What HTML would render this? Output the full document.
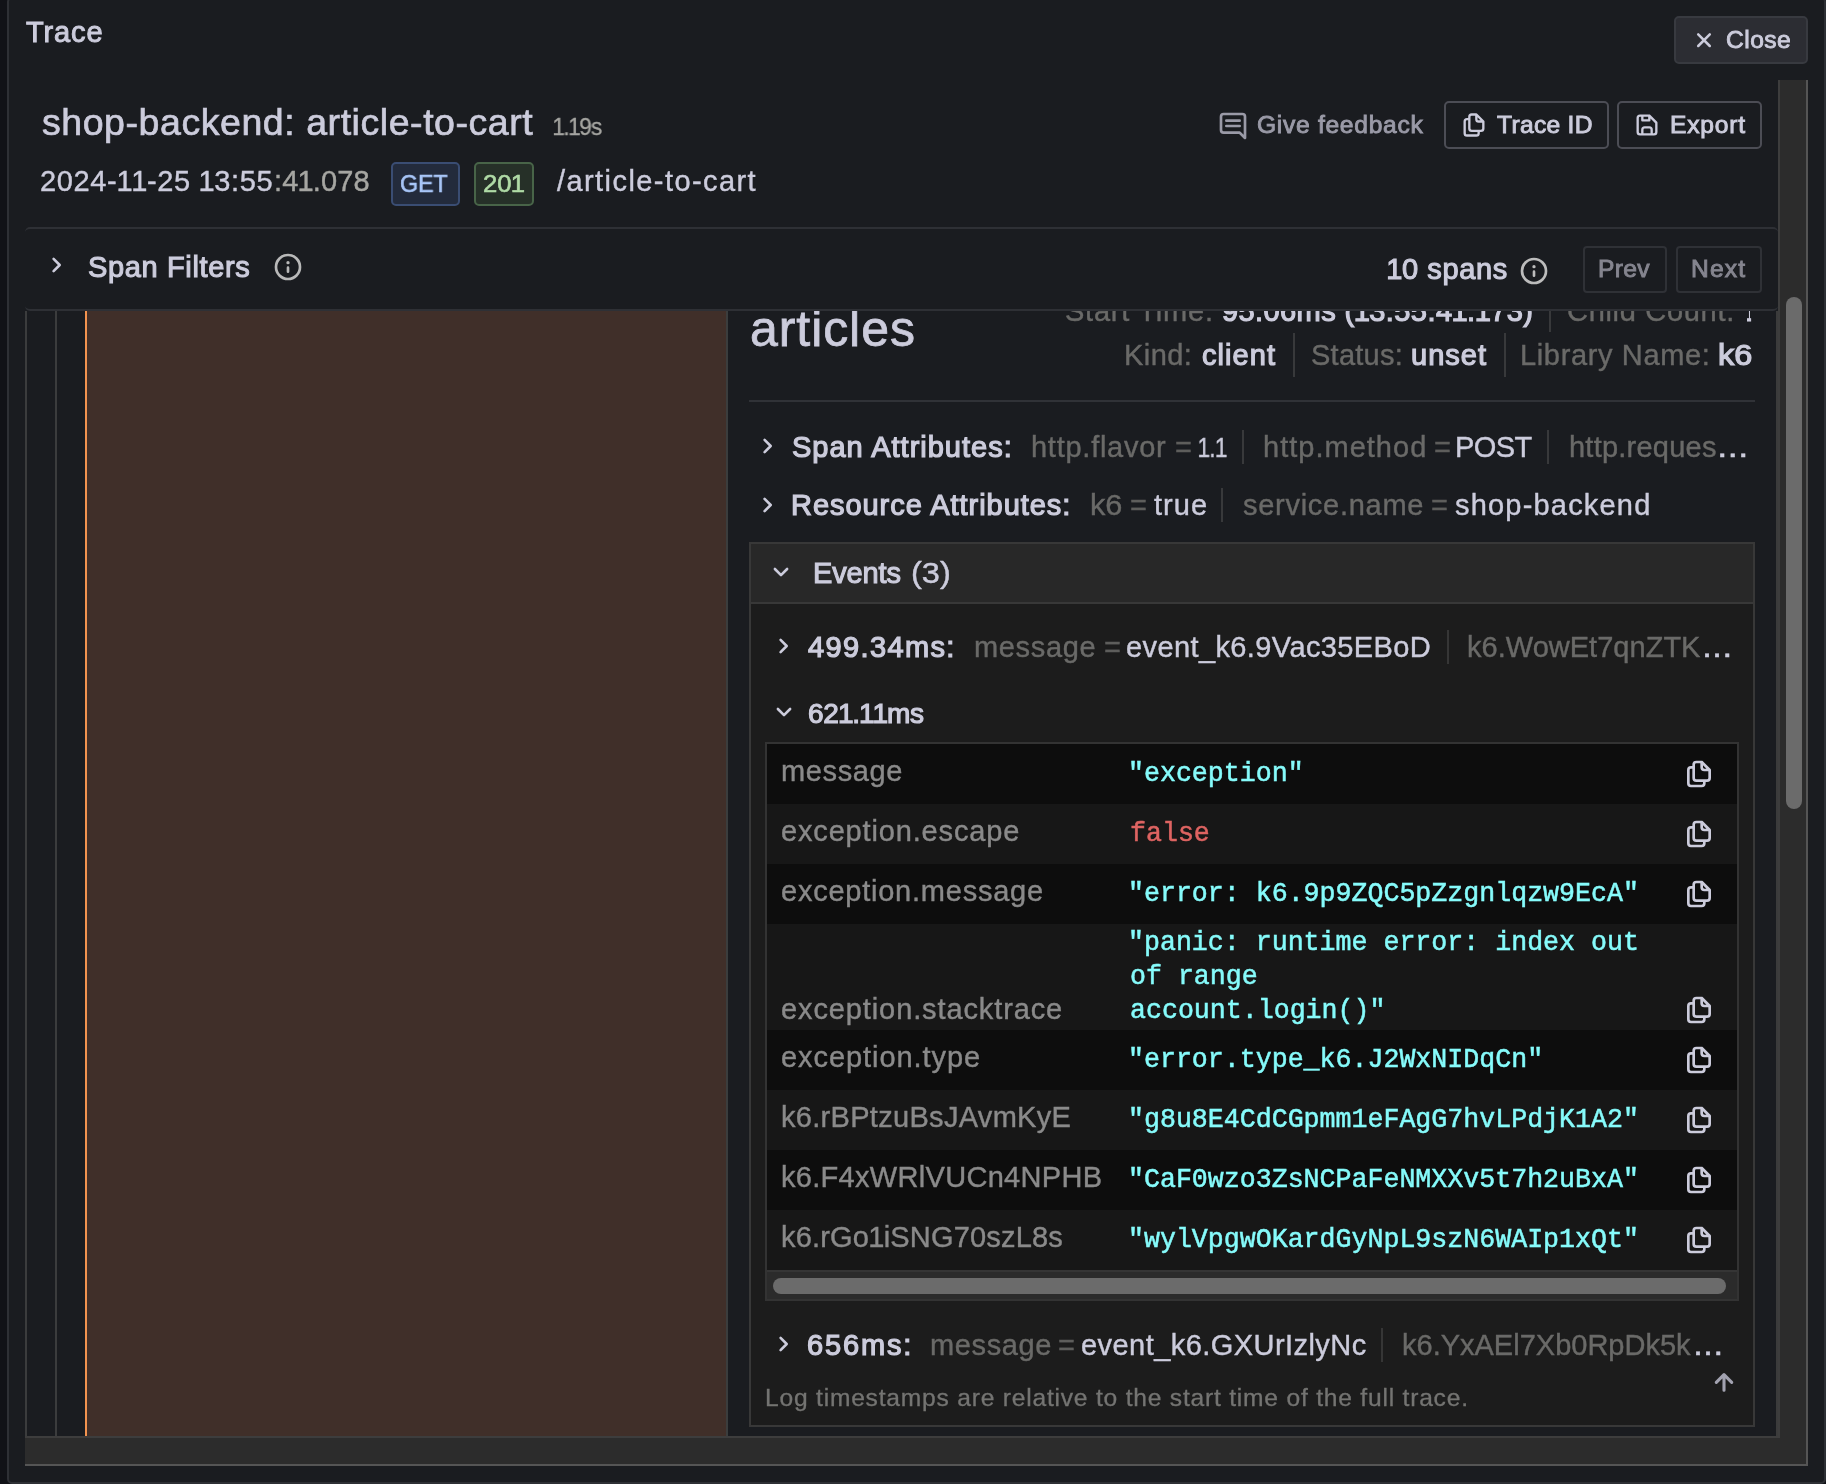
<!DOCTYPE html>
<html><head><meta charset="utf-8"><title>Trace</title>
<style>
html,body{margin:0;padding:0;}
body{width:1826px;height:1484px;overflow:hidden;background:#111217;position:relative;font-family:"Liberation Sans",sans-serif;}
.a{position:absolute;box-sizing:border-box;}
.t{position:absolute;white-space:pre;line-height:1;transform-origin:0 0;will-change:transform;}
.m{font-family:"Liberation Mono",monospace;}
</style></head><body>

<div class="a" style="left:7px;top:-3px;width:1819px;height:1487px;background:#1a1c20;border:2px solid #2e3035;border-radius:5px;"></div>
<div class="a" style="left:25px;top:311px;width:1753px;height:1127px;overflow:hidden;">
<div class="a" style="left:0px;top:0px;width:2px;height:1125px;background:#3b3c3d;"></div>
<div class="a" style="left:30px;top:0px;width:2px;height:1125px;background:#3b3c3d;"></div>
<div class="a" style="left:60px;top:0px;width:2px;height:1125px;background:#f3934f;"></div>
<div class="a" style="left:62px;top:0px;width:639px;height:1125px;background:#402f29;"></div>
<div class="a" style="left:701px;top:0px;width:2px;height:1125px;background:#3b3d3d;"></div>
<div class="a" style="left:1751px;top:0px;width:2px;height:1127px;background:#3b3b3b;"></div>
<div class="a" style="left:0px;top:1125px;width:1753px;height:2px;background:#3d3d3d;"></div>
<div class="a" style="left:724px;top:89px;width:1006px;height:2px;background:#303237;"></div>
<div class="a" style="left:1268px;top:22px;width:2px;height:44px;background:#38393b;"></div>
<div class="a" style="left:1479px;top:22px;width:2px;height:44px;background:#38393b;"></div>
<div class="a" style="left:1524px;top:-11px;width:2px;height:32px;background:#38393b;"></div>
<div class="a" style="left:1217px;top:119px;width:2px;height:34px;background:#38393b;"></div>
<div class="a" style="left:1522px;top:119px;width:2px;height:34px;background:#38393b;"></div>
<div class="a" style="left:1196px;top:177px;width:2px;height:34px;background:#38393b;"></div>
<div class="a" style="left:724px;top:231px;width:1006px;height:885px;background:#1c1c1c;border:2px solid #383838;"></div>
<div class="a" style="left:726px;top:233px;width:1002px;height:60px;background:#282828;border-bottom:2px solid #383838;"></div>
<div class="a" style="left:1422px;top:319px;width:2px;height:34px;background:#363636;"></div>
<div class="a" style="left:1356px;top:1017px;width:2px;height:34px;background:#363636;"></div>
<div class="a" style="left:740px;top:431px;width:974px;height:559px;background:#0d0d0d;border:2px solid #333;"></div>
<div class="a" style="left:742px;top:433px;width:970px;height:60px;background:#0d0d0d;"></div>
<div class="a" style="left:742px;top:493px;width:970px;height:60px;background:#171717;"></div>
<div class="a" style="left:742px;top:553px;width:970px;height:60px;background:#0d0d0d;"></div>
<div class="a" style="left:742px;top:613px;width:970px;height:106px;background:#171717;"></div>
<div class="a" style="left:742px;top:719px;width:970px;height:60px;background:#0d0d0d;"></div>
<div class="a" style="left:742px;top:779px;width:970px;height:60px;background:#171717;"></div>
<div class="a" style="left:742px;top:839px;width:970px;height:60px;background:#0d0d0d;"></div>
<div class="a" style="left:742px;top:899px;width:970px;height:60px;background:#171717;"></div>
<div class="a" style="left:742px;top:959px;width:970px;height:29px;background:#2b2b2b;border-top:2px solid #353535;"></div>
<div class="a" style="left:748px;top:967px;width:953px;height:16px;background:#6b6b6b;border-radius:8px;"></div>
</div>
<svg class="a" style="left:1683px;top:758px" width="32" height="32" viewBox="0 0 24 24"><path fill="#ccccdc" d="M21,8.94a1.31,1.31,0,0,0-.06-.27l0-.09a1.07,1.07,0,0,0-.19-.28h0l-6-6h0a1.07,1.07,0,0,0-.28-.19.32.32,0,0,0-.09,0A.88.88,0,0,0,14.05,2H10A3,3,0,0,0,7,5V6H6A3,3,0,0,0,3,9V19a3,3,0,0,0,3,3h8a3,3,0,0,0,3-3V18h1a3,3,0,0,0,3-3V9S21,9,21,8.94ZM15,5.41,17.59,8H16a1,1,0,0,1-1-1ZM15,19a1,1,0,0,1-1,1H6a1,1,0,0,1-1-1V9A1,1,0,0,1,6,8H7v7a3,3,0,0,0,3,3h5Zm4-4a1,1,0,0,1-1,1H10a1,1,0,0,1-1-1V5a1,1,0,0,1,1-1h3V7a3,3,0,0,0,3,3h3Z"/></svg>
<svg class="a" style="left:1683px;top:818px" width="32" height="32" viewBox="0 0 24 24"><path fill="#ccccdc" d="M21,8.94a1.31,1.31,0,0,0-.06-.27l0-.09a1.07,1.07,0,0,0-.19-.28h0l-6-6h0a1.07,1.07,0,0,0-.28-.19.32.32,0,0,0-.09,0A.88.88,0,0,0,14.05,2H10A3,3,0,0,0,7,5V6H6A3,3,0,0,0,3,9V19a3,3,0,0,0,3,3h8a3,3,0,0,0,3-3V18h1a3,3,0,0,0,3-3V9S21,9,21,8.94ZM15,5.41,17.59,8H16a1,1,0,0,1-1-1ZM15,19a1,1,0,0,1-1,1H6a1,1,0,0,1-1-1V9A1,1,0,0,1,6,8H7v7a3,3,0,0,0,3,3h5Zm4-4a1,1,0,0,1-1,1H10a1,1,0,0,1-1-1V5a1,1,0,0,1,1-1h3V7a3,3,0,0,0,3,3h3Z"/></svg>
<svg class="a" style="left:1683px;top:878px" width="32" height="32" viewBox="0 0 24 24"><path fill="#ccccdc" d="M21,8.94a1.31,1.31,0,0,0-.06-.27l0-.09a1.07,1.07,0,0,0-.19-.28h0l-6-6h0a1.07,1.07,0,0,0-.28-.19.32.32,0,0,0-.09,0A.88.88,0,0,0,14.05,2H10A3,3,0,0,0,7,5V6H6A3,3,0,0,0,3,9V19a3,3,0,0,0,3,3h8a3,3,0,0,0,3-3V18h1a3,3,0,0,0,3-3V9S21,9,21,8.94ZM15,5.41,17.59,8H16a1,1,0,0,1-1-1ZM15,19a1,1,0,0,1-1,1H6a1,1,0,0,1-1-1V9A1,1,0,0,1,6,8H7v7a3,3,0,0,0,3,3h5Zm4-4a1,1,0,0,1-1,1H10a1,1,0,0,1-1-1V5a1,1,0,0,1,1-1h3V7a3,3,0,0,0,3,3h3Z"/></svg>
<svg class="a" style="left:1683px;top:994px" width="32" height="32" viewBox="0 0 24 24"><path fill="#ccccdc" d="M21,8.94a1.31,1.31,0,0,0-.06-.27l0-.09a1.07,1.07,0,0,0-.19-.28h0l-6-6h0a1.07,1.07,0,0,0-.28-.19.32.32,0,0,0-.09,0A.88.88,0,0,0,14.05,2H10A3,3,0,0,0,7,5V6H6A3,3,0,0,0,3,9V19a3,3,0,0,0,3,3h8a3,3,0,0,0,3-3V18h1a3,3,0,0,0,3-3V9S21,9,21,8.94ZM15,5.41,17.59,8H16a1,1,0,0,1-1-1ZM15,19a1,1,0,0,1-1,1H6a1,1,0,0,1-1-1V9A1,1,0,0,1,6,8H7v7a3,3,0,0,0,3,3h5Zm4-4a1,1,0,0,1-1,1H10a1,1,0,0,1-1-1V5a1,1,0,0,1,1-1h3V7a3,3,0,0,0,3,3h3Z"/></svg>
<svg class="a" style="left:1683px;top:1044px" width="32" height="32" viewBox="0 0 24 24"><path fill="#ccccdc" d="M21,8.94a1.31,1.31,0,0,0-.06-.27l0-.09a1.07,1.07,0,0,0-.19-.28h0l-6-6h0a1.07,1.07,0,0,0-.28-.19.32.32,0,0,0-.09,0A.88.88,0,0,0,14.05,2H10A3,3,0,0,0,7,5V6H6A3,3,0,0,0,3,9V19a3,3,0,0,0,3,3h8a3,3,0,0,0,3-3V18h1a3,3,0,0,0,3-3V9S21,9,21,8.94ZM15,5.41,17.59,8H16a1,1,0,0,1-1-1ZM15,19a1,1,0,0,1-1,1H6a1,1,0,0,1-1-1V9A1,1,0,0,1,6,8H7v7a3,3,0,0,0,3,3h5Zm4-4a1,1,0,0,1-1,1H10a1,1,0,0,1-1-1V5a1,1,0,0,1,1-1h3V7a3,3,0,0,0,3,3h3Z"/></svg>
<svg class="a" style="left:1683px;top:1104px" width="32" height="32" viewBox="0 0 24 24"><path fill="#ccccdc" d="M21,8.94a1.31,1.31,0,0,0-.06-.27l0-.09a1.07,1.07,0,0,0-.19-.28h0l-6-6h0a1.07,1.07,0,0,0-.28-.19.32.32,0,0,0-.09,0A.88.88,0,0,0,14.05,2H10A3,3,0,0,0,7,5V6H6A3,3,0,0,0,3,9V19a3,3,0,0,0,3,3h8a3,3,0,0,0,3-3V18h1a3,3,0,0,0,3-3V9S21,9,21,8.94ZM15,5.41,17.59,8H16a1,1,0,0,1-1-1ZM15,19a1,1,0,0,1-1,1H6a1,1,0,0,1-1-1V9A1,1,0,0,1,6,8H7v7a3,3,0,0,0,3,3h5Zm4-4a1,1,0,0,1-1,1H10a1,1,0,0,1-1-1V5a1,1,0,0,1,1-1h3V7a3,3,0,0,0,3,3h3Z"/></svg>
<svg class="a" style="left:1683px;top:1164px" width="32" height="32" viewBox="0 0 24 24"><path fill="#ccccdc" d="M21,8.94a1.31,1.31,0,0,0-.06-.27l0-.09a1.07,1.07,0,0,0-.19-.28h0l-6-6h0a1.07,1.07,0,0,0-.28-.19.32.32,0,0,0-.09,0A.88.88,0,0,0,14.05,2H10A3,3,0,0,0,7,5V6H6A3,3,0,0,0,3,9V19a3,3,0,0,0,3,3h8a3,3,0,0,0,3-3V18h1a3,3,0,0,0,3-3V9S21,9,21,8.94ZM15,5.41,17.59,8H16a1,1,0,0,1-1-1ZM15,19a1,1,0,0,1-1,1H6a1,1,0,0,1-1-1V9A1,1,0,0,1,6,8H7v7a3,3,0,0,0,3,3h5Zm4-4a1,1,0,0,1-1,1H10a1,1,0,0,1-1-1V5a1,1,0,0,1,1-1h3V7a3,3,0,0,0,3,3h3Z"/></svg>
<svg class="a" style="left:1683px;top:1224px" width="32" height="32" viewBox="0 0 24 24"><path fill="#ccccdc" d="M21,8.94a1.31,1.31,0,0,0-.06-.27l0-.09a1.07,1.07,0,0,0-.19-.28h0l-6-6h0a1.07,1.07,0,0,0-.28-.19.32.32,0,0,0-.09,0A.88.88,0,0,0,14.05,2H10A3,3,0,0,0,7,5V6H6A3,3,0,0,0,3,9V19a3,3,0,0,0,3,3h8a3,3,0,0,0,3-3V18h1a3,3,0,0,0,3-3V9S21,9,21,8.94ZM15,5.41,17.59,8H16a1,1,0,0,1-1-1ZM15,19a1,1,0,0,1-1,1H6a1,1,0,0,1-1-1V9A1,1,0,0,1,6,8H7v7a3,3,0,0,0,3,3h5Zm4-4a1,1,0,0,1-1,1H10a1,1,0,0,1-1-1V5a1,1,0,0,1,1-1h3V7a3,3,0,0,0,3,3h3Z"/></svg>
<svg class="a" style="left:760px;top:434.3px" width="16" height="24" viewBox="0 0 16 24"><polyline points="4.6,5.9 10.7,12 4.6,18.1" fill="none" stroke="#ccccdc" stroke-width="2.6" stroke-linecap="round" stroke-linejoin="round"/></svg>
<svg class="a" style="left:760px;top:492.5px" width="16" height="24" viewBox="0 0 16 24"><polyline points="4.6,5.9 10.7,12 4.6,18.1" fill="none" stroke="#ccccdc" stroke-width="2.6" stroke-linecap="round" stroke-linejoin="round"/></svg>
<svg class="a" style="left:769px;top:564.3px" width="24" height="16" viewBox="0 0 24 16"><polyline points="5.9,5 12,11.1 18.1,5" fill="none" stroke="#ccccdc" stroke-width="2.6" stroke-linecap="round" stroke-linejoin="round"/></svg>
<svg class="a" style="left:775.7px;top:634px" width="16" height="24" viewBox="0 0 16 24"><polyline points="4.6,5.9 10.7,12 4.6,18.1" fill="none" stroke="#ccccdc" stroke-width="2.6" stroke-linecap="round" stroke-linejoin="round"/></svg>
<svg class="a" style="left:772px;top:704px" width="24" height="16" viewBox="0 0 24 16"><polyline points="5.9,5 12,11.1 18.1,5" fill="none" stroke="#ccccdc" stroke-width="2.6" stroke-linecap="round" stroke-linejoin="round"/></svg>
<svg class="a" style="left:776px;top:1332px" width="16" height="24" viewBox="0 0 16 24"><polyline points="4.6,5.9 10.7,12 4.6,18.1" fill="none" stroke="#ccccdc" stroke-width="2.6" stroke-linecap="round" stroke-linejoin="round"/></svg>
<svg class="a" style="left:1712px;top:1369.5px" width="24" height="24" viewBox="0 0 24 24"><path d="M12,20.2V4.8M4.3,12.3 12,4.6 19.7,12.3" fill="none" stroke="#a2a2b0" stroke-width="3.1" stroke-linecap="round" stroke-linejoin="round"/></svg>
<div class="a" style="left:25px;top:1436px;width:1783px;height:30px;background:#2c2c2c;border-top:2px solid #3d3d3d;border-bottom:2px solid #555;"></div>
<div class="a" style="left:1778px;top:80px;width:30px;height:1386px;background:#2c2c2c;border-right:2px solid #555;border-bottom:2px solid #555;"></div>
<div class="a" style="left:1778px;top:80px;width:2px;height:1358px;background:#3d3d3d;"></div>
<div class="a" style="left:1786px;top:297px;width:16px;height:512px;background:#6b6b6b;border-radius:8px;"></div>
<div class="a" style="left:25px;top:227px;width:1753px;height:84px;background:#1a1c20;border-top:2px solid #2e3035;border-bottom:2px solid #2e3035;border-radius:5px;"></div>
<svg class="a" style="left:48.7px;top:253px" width="16" height="24" viewBox="0 0 16 24"><polyline points="4.6,5.9 10.7,12 4.6,18.1" fill="none" stroke="#ccccdc" stroke-width="2.6" stroke-linecap="round" stroke-linejoin="round"/></svg>
<svg class="a" style="left:272px;top:250.8px" width="32" height="32" viewBox="0 0 24 24"><path fill="#b9b9b9" d="M12,2A10,10,0,1,0,22,12,10.01,10.01,0,0,0,12,2Zm0,18a8,8,0,1,1,8-8A8.01,8.01,0,0,1,12,20Zm0-8.5a1,1,0,0,0-1,1v3a1,1,0,0,0,2,0v-3A1,1,0,0,0,12,11.5Zm0-4a1.25,1.25,0,1,0,1.25,1.25A1.25,1.25,0,0,0,12,7.5Z"/></svg>
<svg class="a" style="left:1518px;top:255px" width="32" height="32" viewBox="0 0 24 24"><path fill="#bcbcbc" d="M12,2A10,10,0,1,0,22,12,10.01,10.01,0,0,0,12,2Zm0,18a8,8,0,1,1,8-8A8.01,8.01,0,0,1,12,20Zm0-8.5a1,1,0,0,0-1,1v3a1,1,0,0,0,2,0v-3A1,1,0,0,0,12,11.5Zm0-4a1.25,1.25,0,1,0,1.25,1.25A1.25,1.25,0,0,0,12,7.5Z"/></svg>
<div class="a" style="left:1583px;top:245.5px;width:84px;height:47px;border:2px solid #2f3136;border-radius:4px;"></div>
<div class="a" style="left:1676px;top:245.5px;width:86px;height:47px;border:2px solid #2f3136;border-radius:4px;"></div>
<div class="a" style="left:1674px;top:16px;width:134px;height:48px;background:#2c2d33;border:2px solid #383a40;border-radius:5px;"></div>
<svg class="a" style="left:1692px;top:28px" width="24" height="24" viewBox="0 0 24 24"><path d="M6.2,6.4 17.8,18M17.8,6.4 6.2,18" fill="none" stroke="#ccccdc" stroke-width="2.5" stroke-linecap="round"/></svg>
<div class="a" style="left:391px;top:162px;width:69px;height:44px;background:#232b3c;border:2px solid #3a4d73;border-radius:5px;"></div>
<div class="a" style="left:474px;top:162px;width:60px;height:44px;background:#263028;border:2px solid #486448;border-radius:5px;"></div>
<svg class="a" style="left:1217px;top:110px" width="32" height="32" viewBox="0 0 24 24"><path fill="#9a9aa7" d="M7,9H17a1,1,0,0,0,0-2H7A1,1,0,0,0,7,9Zm0,4H17a1,1,0,0,0,0-2H7a1,1,0,0,0,0,2ZM19,2H5A3,3,0,0,0,2,5V15a3,3,0,0,0,3,3H16.59l3.7,3.71A1,1,0,0,0,21,22a.84.84,0,0,0,.38-.08A1,1,0,0,0,22,21V5A3,3,0,0,0,19,2Zm1,16.59-2.29-2.3A1,1,0,0,0,17,16H5a1,1,0,0,1-1-1V5A1,1,0,0,1,5,4H19a1,1,0,0,1,1,1Z"/></svg>
<div class="a" style="left:1444px;top:101px;width:165px;height:48px;border:2px solid #4c4d55;border-radius:5px;"></div>
<div class="a" style="left:1617px;top:101px;width:145px;height:48px;border:2px solid #4c4d55;border-radius:5px;"></div>
<svg class="a" style="left:1460.4px;top:111.2px" width="28" height="28" viewBox="0 0 24 24"><path fill="#ccccdc" d="M21,8.94a1.31,1.31,0,0,0-.06-.27l0-.09a1.07,1.07,0,0,0-.19-.28h0l-6-6h0a1.07,1.07,0,0,0-.28-.19.32.32,0,0,0-.09,0A.88.88,0,0,0,14.05,2H10A3,3,0,0,0,7,5V6H6A3,3,0,0,0,3,9V19a3,3,0,0,0,3,3h8a3,3,0,0,0,3-3V18h1a3,3,0,0,0,3-3V9S21,9,21,8.94ZM15,5.41,17.59,8H16a1,1,0,0,1-1-1ZM15,19a1,1,0,0,1-1,1H6a1,1,0,0,1-1-1V9A1,1,0,0,1,6,8H7v7a3,3,0,0,0,3,3h5Zm4-4a1,1,0,0,1-1,1H10a1,1,0,0,1-1-1V5a1,1,0,0,1,1-1h3V7a3,3,0,0,0,3,3h3Z"/></svg>
<svg class="a" style="left:1632.9px;top:110.7px" width="28" height="28" viewBox="0 0 24 24"><path fill="#ccccdc" d="M20.71,9.29l-6-6a1,1,0,0,0-.32-.21A1.09,1.09,0,0,0,14,3H6A3,3,0,0,0,3,6V18a3,3,0,0,0,3,3H18a3,3,0,0,0,3-3V10A1,1,0,0,0,20.71,9.29ZM9,5h4V7H9Zm6,14H9V16a1,1,0,0,1,1-1h4a1,1,0,0,1,1,1Zm4-1a1,1,0,0,1-1,1H17V16a3,3,0,0,0-3-3H10a3,3,0,0,0-3,3v3H6a1,1,0,0,1-1-1V6A1,1,0,0,1,6,5H7V8A1,1,0,0,0,8,9h6a1,1,0,0,0,1-1V6.41l4,4Z"/></svg>
<span class="t" style="left:26px;top:18px;font-size:29px;color:#ccccdc;letter-spacing:0.9px;-webkit-text-stroke:1.0px #ccccdc;">Trace</span>
<span class="t" style="left:1726.4px;top:28px;font-size:24.6px;color:#ccccdc;letter-spacing:0.475px;-webkit-text-stroke:0.9px #ccccdc;">Close</span>
<span class="t" style="left:42px;top:104px;font-size:37.5px;color:#ccccdc;letter-spacing:0.554px;-webkit-text-stroke:0.7px #ccccdc;">shop-backend: article-to-cart</span>
<span class="t" style="left:553.0px;top:115.6px;font-size:23.6px;color:#a6a6a2;letter-spacing:-0.826px;-webkit-text-stroke:0.33px #a6a6a2;transform-origin:0 19px;transform:scale(0.9608,1);"><span style="margin:0 -0.035em 0 -0.03em">1</span>.<span style="margin:0 -0.035em 0 -0.03em">1</span>9s</span>
<span class="t" style="left:40px;top:167px;font-size:29px;color:#ccccdc;letter-spacing:0.613px;-webkit-text-stroke:0.41px #ccccdc;">2024-<span style="margin:0 -0.035em 0 -0.03em">1</span><span style="margin:0 -0.035em 0 -0.03em">1</span>-25 <span style="margin:0 -0.035em 0 -0.03em">1</span>3:55</span>
<span class="t" style="left:273.8px;top:167px;font-size:29px;color:#a6a6a2;letter-spacing:0.133px;-webkit-text-stroke:0.41px #a6a6a2;">:4<span style="margin:0 -0.035em 0 -0.03em">1</span>.078</span>
<span class="t" style="left:400.45px;top:172px;font-size:24.4px;color:#a8c6f8;-webkit-text-stroke:0.6px #a8c6f8;transform-origin:0 20px;transform:scale(0.951,1);">GET</span>
<span class="t" style="left:482.95px;top:172px;font-size:24.4px;color:#b0dba6;-webkit-text-stroke:0.6px #b0dba6;transform-origin:0 20px;transform:scale(1.0513,1);">20<span style="margin:0 -0.035em 0 -0.03em">1</span></span>
<span class="t" style="left:557px;top:167px;font-size:29px;color:#ccccdc;letter-spacing:1.427px;-webkit-text-stroke:0.41px #ccccdc;">/article-to-cart</span>
<span class="t" style="left:1257px;top:113px;font-size:24.6px;color:#9a9aa7;letter-spacing:0.708px;-webkit-text-stroke:0.9px #9a9aa7;">Give feedback</span>
<span class="t" style="left:1497.2px;top:113px;font-size:24.6px;color:#ccccdc;letter-spacing:0.3px;-webkit-text-stroke:0.93px #ccccdc;">Trace ID</span>
<span class="t" style="left:1669.6px;top:113px;font-size:24.6px;color:#ccccdc;letter-spacing:0.78px;-webkit-text-stroke:0.93px #ccccdc;">Export</span>
<span class="t" style="left:88.2px;top:252.7px;font-size:29px;color:#ccccdc;letter-spacing:0.636px;-webkit-text-stroke:1.1px #ccccdc;">Span Filters</span>
<span class="t" style="left:1387px;top:255px;font-size:29px;color:#ccccdc;letter-spacing:0.614px;-webkit-text-stroke:1.1px #ccccdc;"><span style="margin:0 -0.035em 0 -0.03em">1</span>0 spans</span>
<span class="t" style="left:1598px;top:257px;font-size:24.6px;color:#85858f;letter-spacing:0.333px;-webkit-text-stroke:0.93px #85858f;">Prev</span>
<span class="t" style="left:1691px;top:257px;font-size:24.6px;color:#85858f;letter-spacing:1.133px;-webkit-text-stroke:0.93px #85858f;">Next</span>
<div class="a" style="left:728px;top:311px;width:1048px;height:1125px;overflow:hidden;"><span class="t" style="left:21.799999999999955px;top:-7px;font-size:50px;color:#ccccdc;letter-spacing:0.929px;-webkit-text-stroke:0.8px #ccccdc;">articles</span></div>
<div class="a" style="left:728px;top:311px;width:1048px;height:1125px;overflow:hidden;"><span class="t" style="left:337.20000000000005px;top:-14.399999999999977px;font-size:29px;color:#6a6a68;letter-spacing:0.78px;-webkit-text-stroke:0.41px #6a6a68;">Start Time:</span></div>
<div class="a" style="left:728px;top:311px;width:1048px;height:1125px;overflow:hidden;"><span class="t" style="left:493.79999999999995px;top:-14.399999999999977px;font-size:29px;color:#ccccdc;letter-spacing:0.41px;-webkit-text-stroke:1.22px #ccccdc;">95.06ms (<span style="margin:0 -0.035em 0 -0.03em">1</span>3:55:4<span style="margin:0 -0.035em 0 -0.03em">1</span>.<span style="margin:0 -0.035em 0 -0.03em">1</span>73)</span></div>
<div class="a" style="left:728px;top:311px;width:1048px;height:1125px;overflow:hidden;"><span class="t" style="left:839px;top:-14.399999999999977px;font-size:29px;color:#6a6a68;letter-spacing:0.691px;-webkit-text-stroke:0.41px #6a6a68;">Child Count:</span></div>
<div class="a" style="left:728px;top:311px;width:1048px;height:1125px;overflow:hidden;"><span class="t" style="left:1019.0px;top:-14.399999999999977px;font-size:29px;color:#ccccdc;-webkit-text-stroke:1.22px #ccccdc;transform-origin:0 24px;transform:scale(0.2933,1);"><span style="margin:0 -0.035em 0 -0.03em">1</span></span></div>
<span class="t" style="left:1124.3px;top:340.8px;font-size:29px;color:#6a6a68;letter-spacing:0.425px;-webkit-text-stroke:0.41px #6a6a68;">Kind:</span>
<span class="t" style="left:1202px;top:340.8px;font-size:29px;color:#ccccdc;letter-spacing:1.06px;-webkit-text-stroke:1.22px #ccccdc;">client</span>
<span class="t" style="left:1310.5px;top:340.8px;font-size:29px;color:#6a6a68;letter-spacing:0.25px;-webkit-text-stroke:0.41px #6a6a68;">Status:</span>
<span class="t" style="left:1411px;top:340.8px;font-size:29px;color:#ccccdc;letter-spacing:1.0px;-webkit-text-stroke:1.22px #ccccdc;">unset</span>
<span class="t" style="left:1520.3px;top:340.8px;font-size:29px;color:#6a6a68;letter-spacing:0.642px;-webkit-text-stroke:0.41px #6a6a68;">Library Name:</span>
<span class="t" style="left:1718.48px;top:340.8px;font-size:29px;color:#ccccdc;-webkit-text-stroke:1.22px #ccccdc;transform-origin:0 24px;transform:scale(1.1172,1);">k6</span>
<span class="t" style="left:792px;top:433px;font-size:29px;color:#ccccdc;letter-spacing:1.0px;-webkit-text-stroke:1.22px #ccccdc;">Span Attributes:</span>
<span class="t" style="left:1031px;top:433px;font-size:29px;color:#6a6a68;letter-spacing:0.74px;-webkit-text-stroke:0.41px #6a6a68;">http.flavor</span>
<span class="t" style="left:1175px;top:433px;font-size:29px;color:#5e5e5c;-webkit-text-stroke:0.41px #5e5e5c;">=</span>
<span class="t" style="left:1197.77px;top:434px;font-size:27.5px;color:#ccccdc;-webkit-text-stroke:0.39px #ccccdc;transform-origin:0 23px;transform:scale(0.8294,1);"><span style="margin:0 -0.035em 0 -0.03em">1</span>.<span style="margin:0 -0.035em 0 -0.03em">1</span></span>
<span class="t" style="left:1262.9px;top:433px;font-size:29px;color:#6a6a68;letter-spacing:1.01px;-webkit-text-stroke:0.41px #6a6a68;">http.method</span>
<span class="t" style="left:1433.7px;top:433px;font-size:29px;color:#5e5e5c;-webkit-text-stroke:0.41px #5e5e5c;">=</span>
<span class="t" style="left:1455px;top:433px;font-size:29px;color:#ccccdc;letter-spacing:-0.567px;-webkit-text-stroke:0.41px #ccccdc;">POST</span>
<span class="t" style="left:1568.7px;top:433px;font-size:29px;color:#6a6a68;letter-spacing:0.23px;-webkit-text-stroke:0.41px #6a6a68;">http.reques</span>
<span class="t" style="left:1717.4px;top:433px;font-size:29px;color:#ccccdc;-webkit-text-stroke:0.41px #ccccdc;transform-origin:0 24px;transform:scale(1.3,1);">...</span>
<span class="t" style="left:791px;top:491.2px;font-size:29px;color:#ccccdc;letter-spacing:0.958px;-webkit-text-stroke:1.22px #ccccdc;">Resource Attributes:</span>
<span class="t" style="left:1089.54px;top:491.2px;font-size:29px;color:#6a6a68;-webkit-text-stroke:0.41px #6a6a68;transform-origin:0 24px;transform:scale(1.0586,1);">k6</span>
<span class="t" style="left:1130px;top:491.2px;font-size:29px;color:#5e5e5c;-webkit-text-stroke:0.41px #5e5e5c;">=</span>
<span class="t" style="left:1153.5px;top:491.2px;font-size:29px;color:#ccccdc;letter-spacing:1.033px;-webkit-text-stroke:0.41px #ccccdc;">true</span>
<span class="t" style="left:1243px;top:491.2px;font-size:29px;color:#6a6a68;letter-spacing:0.727px;-webkit-text-stroke:0.41px #6a6a68;">service.name</span>
<span class="t" style="left:1430.7px;top:491.2px;font-size:29px;color:#5e5e5c;-webkit-text-stroke:0.41px #5e5e5c;">=</span>
<span class="t" style="left:1454.7px;top:491.2px;font-size:29px;color:#ccccdc;letter-spacing:1.191px;-webkit-text-stroke:0.41px #ccccdc;">shop-backend</span>
<span class="t" style="left:812.7px;top:558.6px;font-size:29px;color:#ccccdc;letter-spacing:-0.14px;-webkit-text-stroke:1.1px #ccccdc;">Events</span>
<span class="t" style="left:910.88px;top:558.6px;font-size:29px;color:#ccccdc;-webkit-text-stroke:0.41px #ccccdc;transform-origin:0 24px;transform:scale(1.1212,1);">(3)</span>
<span class="t" style="left:808.4px;top:632.6px;font-size:29px;color:#ccccdc;letter-spacing:1.375px;-webkit-text-stroke:1.22px #ccccdc;">499.34ms:</span>
<span class="t" style="left:974px;top:632.6px;font-size:29px;color:#6a6a68;letter-spacing:0.667px;-webkit-text-stroke:0.41px #6a6a68;">message</span>
<span class="t" style="left:1103.8px;top:632.6px;font-size:29px;color:#5e5e5c;-webkit-text-stroke:0.41px #5e5e5c;">=</span>
<span class="t" style="left:1126.3px;top:632.6px;font-size:29px;color:#ccccdc;letter-spacing:0.394px;-webkit-text-stroke:0.41px #ccccdc;">event_k6.9Vac35EBoD</span>
<span class="t" style="left:1466.7px;top:632.6px;font-size:29px;color:#6a6a68;letter-spacing:0.023px;-webkit-text-stroke:0.41px #6a6a68;">k6.WowEt7qnZTK</span>
<span class="t" style="left:1701.5px;top:632.6px;font-size:29px;color:#ccccdc;-webkit-text-stroke:0.41px #ccccdc;transform-origin:0 24px;transform:scale(1.25,1);">...</span>
<span class="t" style="left:808px;top:699.8px;font-size:28px;color:#ccccdc;letter-spacing:-0.214px;-webkit-text-stroke:1.18px #ccccdc;">62<span style="margin:0 -0.035em 0 -0.03em">1</span>.<span style="margin:0 -0.035em 0 -0.03em">1</span><span style="margin:0 -0.035em 0 -0.03em">1</span>ms</span>
<span class="t" style="left:781.3px;top:757px;font-size:29px;color:#8a8a8a;letter-spacing:0.617px;-webkit-text-stroke:0.41px #8a8a8a;">message</span>
<span class="t" style="left:781.3px;top:817px;font-size:29px;color:#8a8a8a;letter-spacing:0.84px;-webkit-text-stroke:0.41px #8a8a8a;">exception.escape</span>
<span class="t" style="left:781.3px;top:877px;font-size:29px;color:#8a8a8a;letter-spacing:0.763px;-webkit-text-stroke:0.41px #8a8a8a;">exception.message</span>
<span class="t" style="left:781.3px;top:994.5px;font-size:29px;color:#8a8a8a;letter-spacing:0.889px;-webkit-text-stroke:0.41px #8a8a8a;">exception.stacktrace</span>
<span class="t" style="left:781.3px;top:1043px;font-size:29px;color:#8a8a8a;letter-spacing:0.938px;-webkit-text-stroke:0.41px #8a8a8a;">exception.type</span>
<span class="t" style="left:781.3px;top:1103px;font-size:29px;color:#8a8a8a;letter-spacing:0.306px;-webkit-text-stroke:0.41px #8a8a8a;">k6.rBPtzuBsJAvmKyE</span>
<span class="t" style="left:781.3px;top:1163px;font-size:29px;color:#8a8a8a;letter-spacing:0.306px;-webkit-text-stroke:0.41px #8a8a8a;">k6.F4xWRlVUCn4NPHB</span>
<span class="t" style="left:781.3px;top:1223px;font-size:29px;color:#8a8a8a;letter-spacing:0.188px;-webkit-text-stroke:0.41px #8a8a8a;">k6.rGo<span style="margin:0 -0.035em 0 -0.03em">1</span>iSNG70szL8s</span>
<span class="t m" style="left:1128px;top:761px;font-size:26.62px;color:#86fbfb;letter-spacing:-0.003px;-webkit-text-stroke:0.5px #86fbfb;transform-origin:0 20px;transform:scale(1,1.07);">"exception"</span>
<span class="t m" style="left:1130px;top:821px;font-size:26.62px;color:#de6462;letter-spacing:-0.003px;-webkit-text-stroke:0.5px #de6462;transform-origin:0 20px;transform:scale(1,1.07);">false</span>
<span class="t m" style="left:1128px;top:881px;font-size:26.62px;color:#86fbfb;letter-spacing:-0.003px;-webkit-text-stroke:0.5px #86fbfb;transform-origin:0 20px;transform:scale(1,1.07);">"error: k6.9p9ZQC5pZzgnlqzw9EcA"</span>
<span class="t m" style="left:1128px;top:929.5px;font-size:26.62px;color:#86fbfb;letter-spacing:-0.003px;-webkit-text-stroke:0.5px #86fbfb;transform-origin:0 20px;transform:scale(1,1.07);">"panic: runtime error: index out</span>
<span class="t m" style="left:1130px;top:963.8px;font-size:26.62px;color:#86fbfb;letter-spacing:-0.003px;-webkit-text-stroke:0.5px #86fbfb;transform-origin:0 20px;transform:scale(1,1.07);">of range</span>
<span class="t m" style="left:1130px;top:997.8px;font-size:26.62px;color:#86fbfb;letter-spacing:-0.003px;-webkit-text-stroke:0.5px #86fbfb;transform-origin:0 20px;transform:scale(1,1.07);">account.login()"</span>
<span class="t m" style="left:1128px;top:1047px;font-size:26.62px;color:#86fbfb;letter-spacing:-0.003px;-webkit-text-stroke:0.5px #86fbfb;transform-origin:0 20px;transform:scale(1,1.07);">"error.type_k6.J2WxNIDqCn"</span>
<span class="t m" style="left:1128px;top:1107px;font-size:26.62px;color:#86fbfb;letter-spacing:-0.003px;-webkit-text-stroke:0.5px #86fbfb;transform-origin:0 20px;transform:scale(1,1.07);">"g8u8E4CdCGpmm1eFAgG7hvLPdjK1A2"</span>
<span class="t m" style="left:1128px;top:1167px;font-size:26.62px;color:#86fbfb;letter-spacing:-0.003px;-webkit-text-stroke:0.5px #86fbfb;transform-origin:0 20px;transform:scale(1,1.07);">"CaF0wzo3ZsNCPaFeNMXXv5t7h2uBxA"</span>
<span class="t m" style="left:1128px;top:1227px;font-size:26.62px;color:#86fbfb;letter-spacing:-0.003px;-webkit-text-stroke:0.5px #86fbfb;transform-origin:0 20px;transform:scale(1,1.07);">"wylVpgwOKardGyNpL9szN6WAIp1xQt"</span>
<span class="t" style="left:806.5px;top:1331.3px;font-size:29px;color:#ccccdc;letter-spacing:1.86px;-webkit-text-stroke:1.22px #ccccdc;">656ms:</span>
<span class="t" style="left:929.7px;top:1331.3px;font-size:29px;color:#6a6a68;letter-spacing:0.617px;-webkit-text-stroke:0.41px #6a6a68;">message</span>
<span class="t" style="left:1058.4px;top:1331.3px;font-size:29px;color:#5e5e5c;-webkit-text-stroke:0.41px #5e5e5c;">=</span>
<span class="t" style="left:1081px;top:1331.3px;font-size:29px;color:#ccccdc;letter-spacing:0.444px;-webkit-text-stroke:0.41px #ccccdc;">event_k6.GXUrIzlyNc</span>
<span class="t" style="left:1402px;top:1331.3px;font-size:29px;color:#6a6a68;-webkit-text-stroke:0.41px #6a6a68;">k6.YxAEl7Xb0RpDk5k</span>
<span class="t" style="left:1692.5px;top:1331.3px;font-size:29px;color:#ccccdc;-webkit-text-stroke:0.41px #ccccdc;transform-origin:0 24px;transform:scale(1.25,1);">...</span>
<span class="t" style="left:765.4px;top:1386px;font-size:24.6px;color:#747472;letter-spacing:0.787px;-webkit-text-stroke:0.34px #747472;">Log timestamps are relative to the start time of the full trace.</span>
</body></html>
